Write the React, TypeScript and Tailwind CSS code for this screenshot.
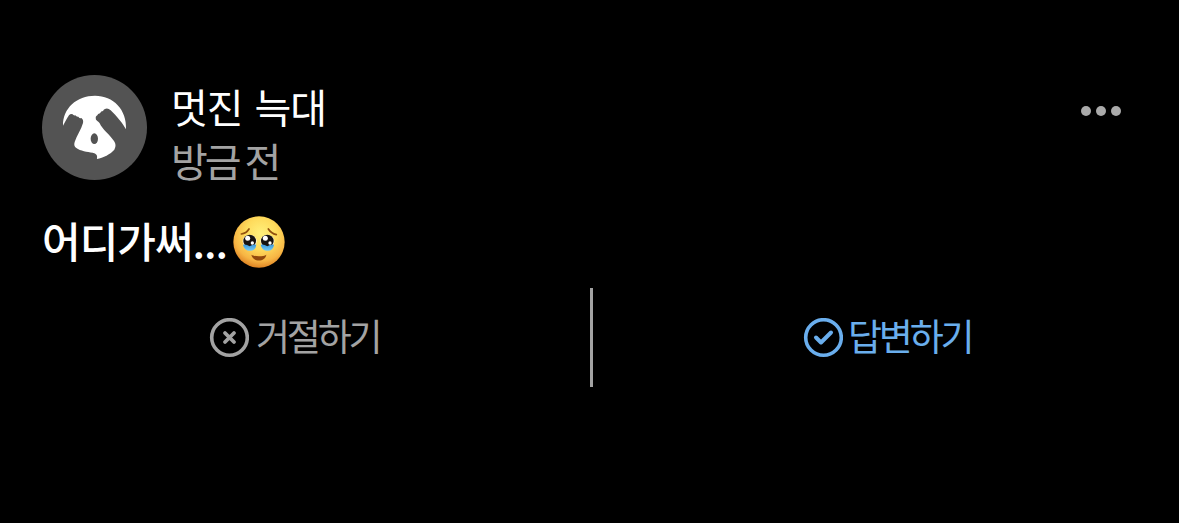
import { ReactNode } from "react";

const fontStyle = "font-['Noto_Sans_CJK_KR',sans-serif]"

function Avatar() {
    return (
        <svg className="size-[105px] shrink-0" viewBox="36 30 315 315">
            <circle cx="193.5" cy="187.5" r="157.5" fill="#535353" />
            <path
                fill="#fff"
                d="M99 182C98 130 140 92 195 92C250 92 291 134 288 193C278 175 260 153 242 136Q234 128 227 131Q221 132 219 138Q213 138 210 145Q203 146 202 151Q195 154 198 164C204 170 207 171 209 175C217 193 237 207 252 228Q261 241 253 254C242 267 219 279 201 282C200 279 203 277 200 270Q196 264 188 263C172 261 151 258 139 249Q130 243 134 231C140 211 154 194 159 174Q161 164 154 159Q149 161 145 155Q139 156 136 151Q130 152 128 148Q122 145 117 151C111 160 106 170 99 182Z"
            />
            <ellipse cx="193" cy="221" rx="11" ry="16" fill="#535353" />
        </svg>
    )
}

function TearyFace() {
    return (
        <svg className="h-[52px] w-[52px] shrink-0" viewBox="22 16 156 156" role="img" aria-label="🥹">
            <defs>
                <radialGradient id="face" cx="0.54" cy="0.34" r="0.68">
                    <stop offset="0" stopColor="#fff17c" />
                    <stop offset="0.45" stopColor="#fedb5c" />
                    <stop offset="0.78" stopColor="#f7b544" />
                    <stop offset="1" stopColor="#dc7e20" />
                </radialGradient>
                <linearGradient id="tear" x1="0" y1="0" x2="0" y2="1">
                    <stop offset="0" stopColor="#3a97dd" />
                    <stop offset="1" stopColor="#74cbf3" />
                </linearGradient>
            </defs>
            <circle cx="100" cy="94" r="77" fill="url(#face)" />
            <g fill="none" stroke="#91500e" strokeWidth="5" strokeLinecap="round">
                <path d="M47 70Q62 68 70 55" />
                <path d="M128 55Q136 68 152 72" />
            </g>
            <g id="eye">
                <ellipse cx="72" cy="92" rx="21" ry="20" fill="#fff5d8" />
                <circle cx="72" cy="91" r="19" fill="#171310" />
                <path d="M52 102Q62 100 72 107Q82 100 92 102Q90 120 73 120Q55 120 52 102Z" fill="url(#tear)" />
                <circle cx="66" cy="83" r="7.5" fill="#fff" />
                <circle cx="80" cy="97" r="5" fill="#fff" />
            </g>
            <use href="#eye" x="53" />
            <path d="M77 132C85 138 114 138 122 132C119 155 81 155 77 132Z" fill="#91480d" />
        </svg>
    )
}

interface ActionProps {
    icon: ReactNode
    label: string
    className: string
}

function Action({ icon, label, className }: ActionProps) {
    return (
        <button className={`flex h-[99px] items-center ${className}`}>
            <svg className="size-[40px] shrink-0" viewBox="0 0 40 40" fill="none" stroke="currentColor" strokeLinecap="round" strokeLinejoin="round">
                <circle cx="20.5" cy="19.5" r="17.8" strokeWidth="3.6" />
                {icon}
            </svg>
            <span className="pb-[5px] text-[37px] leading-[48px] tracking-[-3.2px]">{label}</span>
        </button>
    )
}

export default function App() {
    return (
        <div className={`h-[523px] w-[1179px] overflow-hidden bg-black pt-[75px] text-white ${fontStyle}`}>
            <div className="flex h-[105px] pr-[57px] pl-[42px]">
                <Avatar />
                <div className="ml-[24px] grow pt-[4px]">
                    <p className="text-[40px] leading-[54px] tracking-[-1px] [word-spacing:4px] whitespace-pre">멋진 늑대</p>
                    <p className="text-[40px] leading-[54px] tracking-[-3px] whitespace-pre text-[#a3a3a3]">방금 전</p>
                </div>
                <button className="mt-[31px] flex h-[10px] gap-[5px] pr-[1px]">
                    <span className="size-[10px] rounded-full bg-[#aaaaaa]" />
                    <span className="size-[10px] rounded-full bg-[#aaaaaa]" />
                    <span className="size-[10px] rounded-full bg-[#aaaaaa]" />
                </button>
            </div>
            <div className="mt-[34px] flex h-[56px] items-center pl-[42px]">
                <p className="w-[191px] pb-[5px] text-[42px] leading-[56px] font-medium tracking-[-1px] whitespace-nowrap">어디가써...</p>
                <TearyFace />
            </div>
            <div className="mt-[18px] flex h-[99px]">
                <div className="w-[590px] pl-[209px]">
                    <Action
                        label="거절하기"
                        className="gap-[7px] text-[#a3a3a3]"
                        icon={<path d="M16 15L25 24M25 15L16 24" strokeWidth="3.8" />}
                    />
                </div>
                <div className="w-[3px] bg-[#a3a3a3]" />
                <div className="pl-[210px]">
                    <Action
                        label="답변하기"
                        className="gap-[5px] text-[#6aaeed]"
                        icon={<path d="M13 19.5L18 24.5L28 14.5" strokeWidth="4" />}
                    />
                </div>
            </div>
        </div>
    )
}
